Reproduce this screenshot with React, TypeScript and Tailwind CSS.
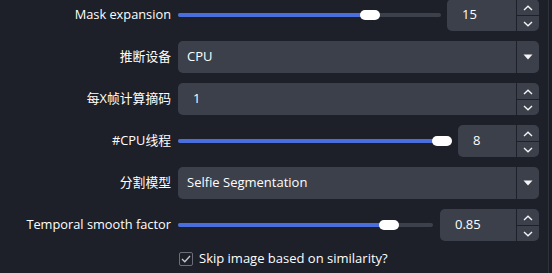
import React from "react";

// OBS-style filter properties panel (dark theme)
const font = { fontFamily: '"Open Sans", "Noto Sans CJK SC", sans-serif' };

function ChevronUp() {
  return (
    <svg width="10" height="6" viewBox="0 0 10 6" fill="none">
      <path d="M1 5L5 1.2L9 5" stroke="#f2f2f2" strokeWidth="1.4" />
    </svg>
  );
}

function ChevronDown() {
  return (
    <svg width="10" height="6" viewBox="0 0 10 6" fill="none">
      <path d="M1 1L5 4.8L9 1" stroke="#f2f2f2" strokeWidth="1.4" />
    </svg>
  );
}

function SpinBox({ value, className }: { value: string; className: string }) {
  return (
    <div className={`flex h-8 shrink-0 overflow-hidden rounded-[5px] bg-[#3c404b] ${className}`}>
      <div className="flex flex-1 items-center pl-[15px] text-[13px] text-[#fefefe]">{value}</div>
      <div className="w-px bg-[#1f212a]" />
      <div className="flex w-[22px] flex-col">
        <div className="flex flex-1 items-center justify-center pt-px">
          <ChevronUp />
        </div>
        <div className="h-px bg-[#1f212a]" />
        <div className="flex flex-1 items-center justify-center">
          <ChevronDown />
        </div>
      </div>
    </div>
  );
}

function Combo({ value }: { value: string }) {
  return (
    <div className="flex h-8 overflow-hidden rounded-[5px] bg-[#3c404b]">
      <div className="flex flex-1 items-center pl-[9px] text-[13px] text-[#fefefe]">{value}</div>
      <div className="w-px bg-[#1f212a]" />
      <div className="flex w-[22px] items-center justify-center">
        <svg width="10" height="6" viewBox="0 0 10 6">
          <path d="M0.5 0.5H9.5L5 5.5Z" fill="#f5f5f5" />
        </svg>
      </div>
    </div>
  );
}

function Slider({ pct }: { pct: number }) {
  return (
    <div className="relative flex h-8 flex-1 items-center">
      <div className="h-1 w-full rounded-full bg-[#3c404b]" />
      <div
        className="absolute left-0 h-1 rounded-full bg-[#4a6fdc]"
        style={{ width: `calc((100% - 20px) * ${pct} + 10px)` }}
      />
      <div
        className="absolute h-[10px] w-5 rounded-full bg-white"
        style={{ left: `calc((100% - 20px) * ${pct})` }}
      />
    </div>
  );
}

function Label({ children }: { children: React.ReactNode }) {
  return (
    <div className="flex h-8 items-center justify-end whitespace-nowrap text-[12.8px] text-[#fefefe]">
      {children}
    </div>
  );
}

export default function App() {
  return (
    <div className="flex h-[273px] w-[552px] overflow-hidden bg-[#1e2029]" style={font}>
      <div className="mt-[-1px] grid w-[548px] grid-cols-[171px_361px] content-start gap-x-[7px] gap-y-[10px]">
        <Label>Mask expansion</Label>
        <div className="flex gap-[6px]">
          <Slider pct={0.749} />
          <SpinBox value="15" className="w-[92px]" />
        </div>

        <Label>推断设备</Label>
        <Combo value="CPU" />

        <Label>每X帧计算摘码</Label>
        <SpinBox value="1" className="w-full" />

        <Label>#CPU线程</Label>
        <div className="flex gap-[6px]">
          <Slider pct={1} />
          <SpinBox value="8" className="w-[81px]" />
        </div>

        <Label>分割模型</Label>
        <Combo value="Selfie Segmentation" />

        <Label>Temporal smooth factor</Label>
        <div className="flex gap-[7px]">
          <Slider pct={0.855} />
          <SpinBox value="0.85" className="w-[99px]" />
        </div>

        <div />
        <div className="flex h-4 items-center gap-[6px] pl-px text-[13px] text-[#fefefe]">
          <div className="flex h-[14px] w-[14px] items-center justify-center rounded-[2px] border border-[#6b6e78]">
            <svg width="10" height="8" viewBox="0 0 10 8" fill="none">
              <path d="M1 4L3.8 6.8L9 1" stroke="#c8c8cc" strokeWidth="1.3" />
            </svg>
          </div>
          <span>Skip image based on similarity?</span>
        </div>
      </div>
      <div className="w-px bg-[#2f323b]" />
      <div className="flex-1 bg-[#1b1d24]" />
    </div>
  );
}
